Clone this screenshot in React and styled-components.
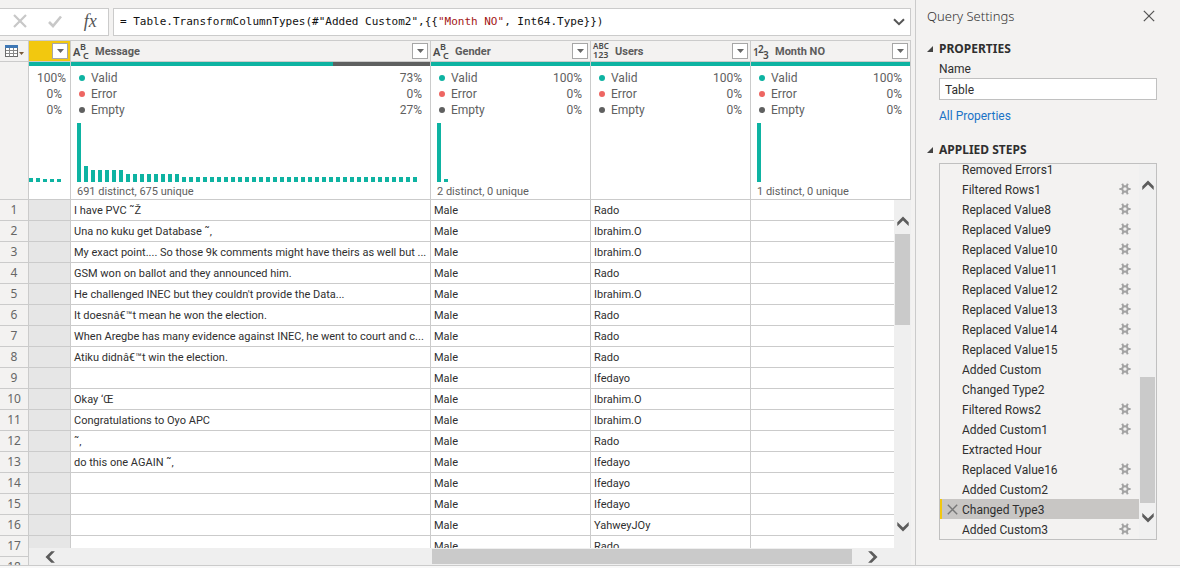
import React from "react";
import styled, { createGlobalStyle, css } from "styled-components";

const c = {
  page: "#f3f2f1",
  line: "#cbcbcb",
  teal: "#0eb3a2",
  red: "#ee6662",
  dark: "#5f6060",
  text: "#2f2f2f",
  muted: "#666666",
  thumb: "#cacaca",
  track: "#efefef",
  yellow: "#f2c80f",
};

const Global = createGlobalStyle`
  *, *::before, *::after { box-sizing: border-box; }
  body {
    margin: 0;
    background: ${c.page};
    color: ${c.text};
    font-family: Roboto, "Open Sans", sans-serif;
    font-size: 12px;
    overflow: hidden;
  }
  button { border: 0; padding: 0; margin: 0; background: none; font: inherit; color: inherit; }
`;

const Shell = styled.div`
  display: flex;
  flex-direction: column;
  height: 100vh;
`;

const Workspace = styled.div`
  flex: 1;
  min-height: 0;
  display: flex;
`;

const BottomEdge = styled.footer`
  height: 3px;
  border-top: 1px solid ${c.line};
  background: #f8f8f8;
`;

const Main = styled.main`
  flex: 1;
  min-width: 0;
  display: flex;
  flex-direction: column;
  gap: 4px;
  padding: 8px 4px 0 0;
`;

/* Formula bar */

const FormulaBar = styled.div`
  display: flex;
  gap: 4px;
  height: 28px;
`;

const FormulaTools = styled.div`
  display: flex;
  align-items: center;
  width: 109px;
  padding: 0 0 2px 2px;
  background: #fff;
  border: 1px solid ${c.line};
  border-left: 0;
`;

const ToolButton = styled.button`
  flex: 1;
  height: 24px;
  display: flex;
  align-items: center;
  justify-content: center;
  color: #c8c8c8;
`;

const FxButton = styled(ToolButton)`
  color: #555;
  font: italic 18px/24px "Liberation Serif", serif;
`;

const FormulaBox = styled.div`
  flex: 1;
  min-width: 0;
  display: flex;
  align-items: center;
  padding: 0 5px 0 6px;
  background: #fff;
  border: 1px solid ${c.line};
`;

const FormulaText = styled.div`
  flex: 1;
  min-width: 0;
  overflow: hidden;
  white-space: pre;
  color: #111;
  font: 11px/16px "DejaVu Sans Mono", monospace;
  outline: none;
`;

const StringToken = styled.span`
  color: #a31515;
`;

/* Data grid */

const GridArea = styled.div`
  position: relative;
  flex: 1;
  min-height: 0;
  overflow: hidden;
  border-top: 1px solid ${c.line};
`;

const DataTable = styled.table`
  width: 100%;
  table-layout: fixed;
  border-collapse: separate;
  border-spacing: 0;
`;

const Col = styled.col`
  width: ${(p) => (p.$width ? `${p.$width}px` : "auto")};
`;

const cellEdges = css`
  padding: 0;
  border-right: 1px solid ${c.line};
  border-bottom: 1px solid ${c.line};
`;

const HeadCell = styled.th`
  ${cellEdges}
  height: 21px;
  background: ${(p) => (p.$selected ? c.yellow : c.page)};
`;

const HeadContent = styled.div`
  display: flex;
  align-items: center;
  gap: 4px;
  height: 20px;
  padding: 0 2px;
`;

const ColumnName = styled.span`
  flex: 1;
  padding-top: 2px;
  text-align: left;
  color: #5c5c5c;
  font-size: 11px;
  font-weight: 700;
  line-height: 18px;
`;

const FilterButton = styled.button`
  display: flex;
  align-items: center;
  justify-content: center;
  width: 16px;
  height: 16px;
  background: #fff;
  border: 1px solid #a6a6a6;
`;

const CornerButton = styled.button`
  display: flex;
  align-items: center;
  height: 20px;
  padding-left: 5px;
`;

const ProfileCell = styled.td`
  ${cellEdges}
  height: 138px;
  vertical-align: top;
  background: #fff;
`;

const RowHead = styled.th`
  ${cellEdges}
  height: 21px;
  background: ${c.page};
  color: ${c.muted};
  font-family: "Noto Sans", sans-serif;
  font-weight: 400;
  font-size: 12px;
  line-height: 20px;
  text-align: center;
`;

const QualityBar = styled.div`
  height: 4px;
  background: ${c.dark};
`;

const QualityValid = styled.div`
  height: 4px;
  background: ${c.teal};
`;

const ProfileBody = styled.div`
  color: #606060;
  padding-top: 4px;
`;

const Stat = styled.div`
  display: flex;
  align-items: center;
  gap: 6px;
  height: 16px;
  padding: 0 8px;
  font-size: 12px;
  line-height: 16px;
`;

const Dot = styled.span`
  width: 6px;
  height: 6px;
  border-radius: 50%;
  background: ${(p) => p.$color};
`;

const StatValue = styled.span`
  margin-left: auto;
`;

const Histogram = styled.svg`
  display: block;
  width: 100%;
  height: 59px;
  margin-top: 5px;
  padding-left: ${(p) => (p.$flush ? 0 : 6)}px;
`;

const Distinct = styled.div`
  padding-left: 6px;
  margin-top: 3px;
  font-size: 11px;
  line-height: 14px;
  white-space: nowrap;
`;

const Cell = styled.td`
  ${cellEdges}
  height: 21px;
  padding: 2px 0 0 3px;
  background: ${(p) => (p.$selected ? "#e6e6e6" : "#fff")};
  font-size: 11px;
  line-height: 18px;
  white-space: nowrap;
  overflow: hidden;
`;

/* Scroll bars */

const ScrollBar = styled.div`
  display: flex;
  flex-direction: ${(p) => (p.$horizontal ? "row" : "column")};
  justify-content: space-between;
  gap: 3px;
  padding: ${(p) => (p.$horizontal ? "1px 11px" : "11px 1px")};
  background: ${c.track};
`;

const ScrollArrow = styled.button`
  flex: none;
  display: flex;
  align-items: center;
  justify-content: center;
  width: ${(p) => (p.$horizontal ? 20 : 15)}px;
  height: ${(p) => (p.$horizontal ? 15 : 20)}px;
`;

const ScrollTrack = styled.span`
  flex: 1;
  display: flex;
  flex-direction: inherit;
`;

const ScrollSpace = styled.span`
  flex: ${(p) => p.$share};
`;

const ScrollThumb = styled.span`
  flex: ${(p) => p.$share};
  background: ${c.thumb};
`;

const GridScrollY = styled(ScrollBar)`
  position: absolute;
  top: 159px;
  right: 0;
  bottom: 17px;
  width: 17px;
`;

const GridScrollX = styled(ScrollBar)`
  position: absolute;
  left: 29px;
  right: 0;
  bottom: 0;
  height: 17px;
  padding-right: 28px;
`;

/* Query settings pane */

const Pane = styled.aside`
  width: 265px;
  display: flex;
  flex-direction: column;
  border-left: 1px solid ${c.line};
  padding: 6px 23px 25px 11px;
`;

const PaneHeader = styled.header`
  display: flex;
  align-items: center;
  justify-content: space-between;
  height: 20px;
  margin-bottom: 13px;
`;

const PaneTitle = styled.h2`
  margin: 0;
  font-family: "Noto Sans", sans-serif;
  font-size: 13px;
  font-weight: 300;
  line-height: 20px;
  color: #333;
`;

const CloseButton = styled.button`
  display: flex;
  align-items: center;
  justify-content: center;
  width: 16px;
  height: 16px;
  color: #555;
`;

const SectionTitle = styled.h3`
  display: flex;
  align-items: center;
  gap: 6px;
  margin: 0;
  height: 20px;
  font-family: "Noto Sans", sans-serif;
  font-size: 12px;
  font-weight: 700;
  line-height: 20px;
`;

const Section = styled.section`
  display: flex;
  flex-direction: column;
  align-items: stretch;
  padding-left: 12px;
`;

const FieldLabel = styled.label`
  height: 19px;
  font-size: 12px;
  line-height: 20px;
`;

const NameInput = styled.input`
  height: 22px;
  padding: 2px 5px 0;
  border: 1px solid #c0c0c0;
  border-radius: 0;
  background: #fff;
  color: ${c.text};
  font: inherit;
  outline: none;
`;

const PropertiesLink = styled.a`
  align-self: flex-start;
  margin: 6px 0 14px;
  color: #1a73c7;
  font-size: 12px;
  line-height: 20px;
  text-decoration: none;
`;

const StepsSection = styled(Section)`
  flex: 1;
  min-height: 0;
  padding-top: 3px;
`;

const StepsBox = styled.div`
  flex: 1;
  min-height: 0;
  display: flex;
  border: 1px solid #c0c0c0;
`;

const StepList = styled.ol`
  flex: 1;
  min-width: 0;
  display: flex;
  flex-direction: column;
  justify-content: flex-end;
  overflow: hidden;
  margin: 0;
  padding: 0;
  list-style: none;
`;

const Step = styled.li`
  flex: none;
  display: flex;
  align-items: center;
  height: 20px;
  padding-right: 8px;
  border-left: 2px solid ${(p) => (p.$current ? c.yellow : "transparent")};
  background: ${(p) => (p.$current ? "#c8c6c4" : "transparent")};
`;

const StepSlot = styled.span`
  width: 20px;
  display: flex;
  justify-content: center;
`;

const StepName = styled.button`
  flex: 1;
  padding-top: 2px;
  text-align: left;
  font-size: 12px;
  line-height: 18px;
  white-space: nowrap;
`;

const IconButton = styled.button`
  display: flex;
  color: #8f8f8f;
`;

const StepsScroll = styled(ScrollBar)`
  width: 17px;
  background: #f0f0f0;
`;

/* Icons */

const Cross = ({ size, weight, color = "currentColor" }) => (
  <svg width={size} height={size} viewBox="0 0 14 14" fill="none" stroke={color} strokeWidth={weight} aria-hidden="true">
    <path d="M1 1L13 13M13 1L1 13" />
  </svg>
);

const Check = () => (
  <svg width="14" height="13" viewBox="0 0 14 13" fill="none" stroke="currentColor" strokeWidth="2.6" aria-hidden="true">
    <path d="M1 7L5 11L13 1.5" />
  </svg>
);

const turns = { up: 0, right: 90, down: 180, left: 270 };

const Chevron = ({ dir }) => (
  <svg width="12" height="12" viewBox="0 0 12 12" aria-hidden="true">
    <path
      d="M0.3 7.3L6 1.5L11.7 7.3V10.9L6 5.4L0.3 10.9Z"
      fill="#5c5c5c"
      transform={`rotate(${turns[dir]} 6 6)`}
    />
  </svg>
);

const ThinChevron = () => (
  <svg width="12" height="8" viewBox="0 0 12 8" fill="none" stroke="#555" strokeWidth="2" aria-hidden="true">
    <path d="M1 1.2L6 6.2L11 1.2" />
  </svg>
);

const Caret = () => (
  <svg width="7" height="4" viewBox="0 0 7 4" aria-hidden="true">
    <path d="M0 0H7L3.5 4Z" fill="#666" />
  </svg>
);

const Triangle = () => (
  <svg width="6" height="6" viewBox="0 0 6 6" aria-hidden="true">
    <path d="M6 0V6H0Z" fill="#444" />
  </svg>
);

const Gear = () => (
  <svg width="12" height="12" viewBox="0 0 12 12" fill="none" stroke="#a3a3a3" aria-hidden="true">
    <circle cx="6" cy="6" r="2.7" strokeWidth="1.9" />
    <path
      d="M0.4 6H3M9 6H11.6M3.2 0.8L4.6 3.6M7.4 8.4L8.8 11.2M8.8 0.8L7.4 3.6M4.6 8.4L3.2 11.2"
      strokeWidth="2"
    />
  </svg>
);

const TableIcon = () => (
  <svg width="20" height="14" viewBox="0 0 20 14" aria-hidden="true">
    <rect x="0.5" y="1.5" width="12" height="11" fill="#fff" stroke="#6b6b6b" />
    <rect x="0" y="1" width="13" height="3" fill="#3f78b5" />
    <path d="M4.5 4V12.5M8.5 4V12.5M1 6.5H12M1 9.5H12" stroke="#8a8a8a" fill="none" />
    <path d="M14 8H19L16.5 11Z" fill="#7a5a3a" />
  </svg>
);

const TypeSvg = styled.svg`
  width: 18px;
  height: 18px;
  overflow: visible;
`;

const Glyph = styled.text`
  font-family: "Noto Sans", sans-serif;
  font-weight: 600;
  font-size: ${(p) => p.$size}px;
  fill: #4a4a4a;
`;

const typeGlyphs = {
  text: [["A", 0, 14, 11], ["B", 7, 8, 9], ["C", 10, 17, 9]],
  any: [["ABC", 0, 7, 8], ["123", 0, 16, 9]],
  number: [["1", 0, 14, 10], ["2", 5, 11, 10], ["3", 10, 17, 10]],
};

const typeNames = { text: "Text", any: "Any", number: "Whole number" };

const TypeIcon = ({ type }) => (
  <TypeSvg viewBox="0 0 18 18" role="img" aria-label={typeNames[type]}>
    {typeGlyphs[type].map(([ch, x, y, size]) => (
      <Glyph key={ch} x={x} y={y} $size={size}>{ch}</Glyph>
    ))}
  </TypeSvg>
);

/* Data */

const repeat = (n, h) => Array(n).fill(h);

const columns = [
  { id: "key", name: "", width: 42, selected: true, quality: ["100%", "0%", "0%"], bars: [4, 4, 3, 3, 3] },
  {
    id: "message", name: "Message", type: "text", width: 360, quality: ["73%", "0%", "27%"],
    bars: [59, 16, ...repeat(5, 12), ...repeat(8, 8), ...repeat(34, 5)], distinct: "691 distinct, 675 unique",
  },
  { id: "gender", name: "Gender", type: "text", width: 160, quality: ["100%", "0%", "0%"], bars: [59, 3], distinct: "2 distinct, 0 unique" },
  { id: "users", name: "Users", type: "any", width: 160, quality: ["100%", "0%", "0%"] },
  { id: "month", name: "Month NO", type: "number", quality: ["100%", "0%", "0%"], bars: [59], distinct: "1 distinct, 0 unique" },
];

const rows = [
  ["I have PVC ˜Ž", "Rado"],
  ["Una no kuku get Database ˜‚", "Ibrahim.O"],
  ["My exact point.... So those 9k comments might have theirs as well but ...", "Ibrahim.O"],
  ["GSM won on ballot and they announced him.", "Rado"],
  ["He challenged INEC but they couldn't provide the Data...", "Ibrahim.O"],
  ["It doesnâ€™t mean he won the election.", "Rado"],
  ["When Aregbe has many evidence against INEC, he went to court and c...", "Rado"],
  ["Atiku didnâ€™t win the election.", "Rado"],
  ["", "Ifedayo"],
  ["Okay ‘Œ", "Ibrahim.O"],
  ["Congratulations to Oyo APC", "Ibrahim.O"],
  ["˜‚", "Rado"],
  ["do this one AGAIN ˜‚", "Ifedayo"],
  ["", "Ifedayo"],
  ["", "Ifedayo"],
  ["", "YahweyJOy"],
  ["", "Rado"],
  ["", "Rado"],
];

const steps = [
  ["Removed Errors1", false],
  ["Filtered Rows1", true],
  ["Replaced Value8", true],
  ["Replaced Value9", true],
  ["Replaced Value10", true],
  ["Replaced Value11", true],
  ["Replaced Value12", true],
  ["Replaced Value13", true],
  ["Replaced Value14", true],
  ["Replaced Value15", true],
  ["Added Custom", true],
  ["Changed Type2", false],
  ["Filtered Rows2", true],
  ["Added Custom1", true],
  ["Extracted Hour", false],
  ["Replaced Value16", true],
  ["Added Custom2", true],
  ["Changed Type3", false],
  ["Added Custom3", true],
];
const currentStep = "Changed Type3";

/* Parts */

const ScrollParts = ({ horizontal, before, size, after }) => (
  <>
    <ScrollArrow $horizontal={horizontal} aria-label="Scroll back">
      <Chevron dir={horizontal ? "left" : "up"} />
    </ScrollArrow>
    <ScrollTrack>
      <ScrollSpace $share={before} />
      <ScrollThumb $share={size} />
      <ScrollSpace $share={after} />
    </ScrollTrack>
    <ScrollArrow $horizontal={horizontal} aria-label="Scroll forward">
      <Chevron dir={horizontal ? "right" : "down"} />
    </ScrollArrow>
  </>
);

const Profile = ({ column }) => {
  const [valid, error, empty] = column.quality;
  const stats = [["Valid", valid, c.teal], ["Error", error, c.red], ["Empty", empty, c.dark]];
  return (
    <ProfileCell>
      <QualityBar>
        <QualityValid style={{ width: valid }} />
      </QualityBar>
      <ProfileBody>
        {stats.map(([label, value, color]) => (
          <Stat key={label}>
            {column.name && <Dot $color={color} />}
            {column.name && <span>{label}</span>}
            <StatValue>{value}</StatValue>
          </Stat>
        ))}
        {column.bars && (
          <Histogram $flush={!column.name} aria-hidden="true">
            {column.bars.map((h, i) => (
              <rect key={i} x={i * 7} y={59 - h} width="4" height={h} fill={c.teal} />
            ))}
          </Histogram>
        )}
        {column.distinct && <Distinct>{column.distinct}</Distinct>}
      </ProfileBody>
    </ProfileCell>
  );
};

const Grid = () => (
  <GridArea>
    <DataTable aria-label="Table preview">
      <colgroup>
        <Col $width={29} />
        {columns.map((col) => <Col key={col.id} $width={col.width} />)}
      </colgroup>
      <thead>
        <tr>
          <HeadCell>
            <CornerButton aria-label="Table options"><TableIcon /></CornerButton>
          </HeadCell>
          {columns.map((col) => (
            <HeadCell key={col.id} $selected={col.selected} scope="col">
              <HeadContent>
                {col.type && <TypeIcon type={col.type} />}
                <ColumnName>{col.name}</ColumnName>
                <FilterButton aria-label={`Filter ${col.name}`}><Caret /></FilterButton>
              </HeadContent>
            </HeadCell>
          ))}
        </tr>
        <tr>
          <RowHead />
          {columns.map((col) => <Profile key={col.id} column={col} />)}
        </tr>
      </thead>
      <tbody>
        {rows.map(([message, user], i) => (
          <tr key={i}>
            <RowHead scope="row">{i + 1}</RowHead>
            <Cell $selected />
            <Cell>{message}</Cell>
            <Cell>Male</Cell>
            <Cell>{user}</Cell>
            <Cell />
          </tr>
        ))}
      </tbody>
    </DataTable>
    <GridScrollY>
      <ScrollParts before={0} size={91} after={189} />
    </GridScrollY>
    <GridScrollX $horizontal>
      <ScrollParts horizontal before={369} size={420} after={8} />
    </GridScrollX>
  </GridArea>
);

export default function App() {
  return (
    <Shell>
      <Global />
      <Workspace>
        <Main>
          <FormulaBar>
            <FormulaTools>
              <ToolButton aria-label="Cancel"><Cross size={14} weight={2.2} /></ToolButton>
              <ToolButton aria-label="Commit"><Check /></ToolButton>
              <FxButton aria-label="Insert step">fx</FxButton>
            </FormulaTools>
            <FormulaBox>
              <FormulaText role="textbox" aria-label="Formula" contentEditable suppressContentEditableWarning spellCheck={false}>
                {'= Table.TransformColumnTypes(#"Added Custom2",{{'}
                <StringToken>"Month NO"</StringToken>
                {", Int64.Type}})"}
              </FormulaText>
              <button aria-label="Expand formula bar"><ThinChevron /></button>
            </FormulaBox>
          </FormulaBar>
          <Grid />
        </Main>
        <Pane>
          <PaneHeader>
            <PaneTitle>Query Settings</PaneTitle>
            <CloseButton aria-label="Close"><Cross size={12} weight={1.5} /></CloseButton>
          </PaneHeader>
          <SectionTitle><Triangle />PROPERTIES</SectionTitle>
          <Section>
            <FieldLabel htmlFor="query-name">Name</FieldLabel>
            <NameInput id="query-name" defaultValue="Table" />
            <PropertiesLink href="#properties">All Properties</PropertiesLink>
          </Section>
          <SectionTitle><Triangle />APPLIED STEPS</SectionTitle>
          <StepsSection>
            <StepsBox>
              <StepList>
                {steps.map(([name, editable]) => (
                  <Step key={name} $current={name === currentStep}>
                    <StepSlot>
                      {name === currentStep && (
                        <IconButton aria-label={`Delete ${name}`}><Cross size={11} weight={1.8} color="#777" /></IconButton>
                      )}
                    </StepSlot>
                    <StepName>{name}</StepName>
                    {editable && <IconButton aria-label={`Edit ${name}`}><Gear /></IconButton>}
                  </Step>
                ))}
              </StepList>
              <StepsScroll>
                <ScrollParts before={179} size={126} after={2} />
              </StepsScroll>
            </StepsBox>
          </StepsSection>
        </Pane>
      </Workspace>
      <BottomEdge />
    </Shell>
  );
}
